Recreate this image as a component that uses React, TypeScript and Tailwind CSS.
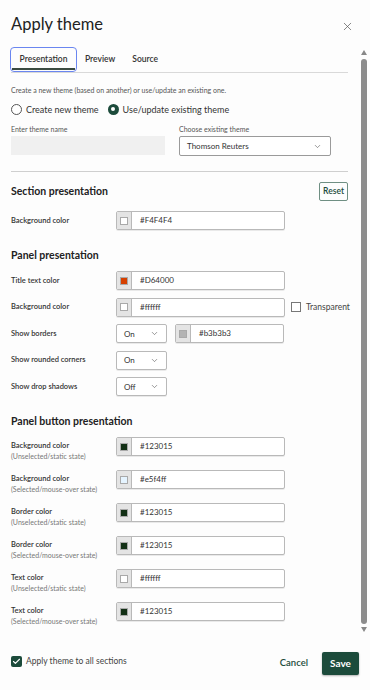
import { ChevronDown, X, Check } from 'lucide-react';

const font = { fontFamily: 'Lato, "Noto Sans", sans-serif' };

// colour input: grey swatch button + hex text
const ColorInput = ({ color, value, w = 'w-[169px]' }: { color: string; value: string; w?: string }) => (
  <div className={`flex shrink-0 h-[19px] ${w} rounded-[2px] border border-[#b9b9b9] bg-white overflow-hidden shadow-[0_1px_0_rgba(0,0,0,0.08)]`}>
    <div className="w-[15px] h-full bg-[#e4e4e4] border-r border-[#b9b9b9] flex items-center justify-center">
      <div className="w-[8px] h-[8px] border border-[#a9a9a9]" style={{ backgroundColor: color }} />
    </div>
    <span className="pl-[8px] text-[8px] leading-[17px] text-[#333]">{value}</span>
  </div>
);

const Select = ({ value, w = 'w-[51px]' }: { value: string; w?: string }) => (
  <div className={`flex shrink-0 h-[19px] ${w} items-center justify-between rounded-[2px] border border-[#b9b9b9] bg-white pl-[7px] pr-[7px] shadow-[0_1px_0_rgba(0,0,0,0.08)]`}>
    <span className="text-[8px] text-[#333]">{value}</span>
    <ChevronDown size={9} strokeWidth={1.6} className="text-[#555]" />
  </div>
);

const Row = ({ label, children, className = '' }: { label: string; children: React.ReactNode; className?: string }) => (
  <div className={`flex items-center ${className}`}>
    <div className="w-[105px] shrink-0 text-[7.5px] font-semibold text-[#333]">{label}</div>
    {children}
  </div>
);

const ButtonRow = ({ label, sub, color, value }: { label: string; sub: string; color: string; value: string }) => (
  <div className="flex items-start h-[33px]">
    <div className="w-[105px] pt-[3px]">
      <div className="text-[7.5px] font-semibold leading-[11px] text-[#333]">{label}</div>
      <div className="text-[7px] leading-[11px] text-[#777]">{sub}</div>
    </div>
    <ColorInput color={color} value={value} />
  </div>
);

export default function App() {
  return (
    <div style={font} className="w-[370px] h-[690px] bg-[#fdfdfd] flex flex-col overflow-hidden text-[#222]">
      {/* header */}
      <div className="flex items-start justify-between pl-[11px] pr-[16px] pt-[12px] h-[44px]">
        <h1 className="text-[16.5px] leading-[24px] text-[#222]">Apply theme</h1>
        <X size={13} strokeWidth={1.3} className="mt-[8px] text-[#555]" />
      </div>

      <div className="flex flex-1 min-h-0">
        {/* scrolling content */}
        <div className="flex-1 pl-[11px] pr-[11px] overflow-hidden">
          {/* tabs */}
          <div className="flex items-end h-[29px] border-b border-[#d9d9d9] text-[8.5px] font-semibold text-[#333]">
            <div className="relative -ml-[1px] h-[25px] w-[67px] rounded-[4px] border-[1.5px] border-[#6a86f0] flex items-center justify-center">
              <span className="-mt-[1px]">Presentation</span>
              <div className="absolute left-[1px] right-[1px] bottom-[1px] h-[2px] bg-[#3a4a40]" />
            </div>
            <div className="h-[25px] px-[7px] flex items-center ml-[1px]">Preview</div>
            <div className="h-[25px] px-[10px] flex items-center">Source</div>
          </div>

          <p className="mt-[12px] text-[7px] text-[#555]">Create a new theme (based on another) or use/update an existing one.</p>

          <div className="mt-[7px] flex items-center text-[9px] text-[#333]">
            <span className="w-[11px] h-[11px] rounded-full border border-[#555] bg-white" />
            <span className="ml-[4px]">Create new theme</span>
            <span className="ml-[9px] w-[11px] h-[11px] rounded-full bg-[#1c4b3b] flex items-center justify-center">
              <span className="w-[4px] h-[4px] rounded-full bg-white" />
            </span>
            <span className="ml-[4px]">Use/update existing theme</span>
          </div>

          <div className="mt-[9px] flex">
            <div className="w-[168px]">
              <div className="text-[7px] text-[#555] leading-[9px]">Enter theme name</div>
              <div className="mt-[2px] h-[19px] w-[154px] bg-[#f0f0f0]" />
            </div>
            <div>
              <div className="text-[7px] text-[#555] leading-[9px]">Choose existing theme</div>
              <div className="mt-[2px] flex h-[20px] w-[152px] items-center justify-between rounded-[2px] border border-[#9a9a9a] bg-white pl-[7px] pr-[8px]">
                <span className="text-[8px] text-[#333]">Thomson Reuters</span>
                <ChevronDown size={9} strokeWidth={1.6} className="text-[#555]" />
              </div>
            </div>
          </div>

          <div className="mt-[15px] h-px bg-[#cfcfcf]" />

          {/* section presentation */}
          <div className="mt-[10px] flex items-center justify-between h-[19px]">
            <h2 className="text-[10.5px] font-bold text-[#222]">Section presentation</h2>
            <div className="h-[19px] px-[3px] rounded-[2px] border border-[#6f8f83] text-[8.5px] font-semibold text-[#1c4b3b] flex items-center">Reset</div>
          </div>
          <Row label="Background color" className="mt-[10px]">
            <ColorInput color="#ffffff" value="#F4F4F4" />
          </Row>

          {/* panel presentation */}
          <h2 className="mt-[18px] text-[10.5px] font-bold leading-[14px] text-[#222]">Panel presentation</h2>
          <div className="mt-[9px] flex flex-col gap-[7.5px]">
            <Row label="Title text color">
              <ColorInput color="#D64000" value="#D64000" />
            </Row>
            <Row label="Background color">
              <ColorInput color="#ffffff" value="#ffffff" />
              <span className="ml-[6px] shrink-0 w-[10px] h-[10px] border border-[#777] bg-white" />
              <span className="ml-[5px] whitespace-nowrap text-[8.5px] text-[#444]">Transparent</span>
            </Row>
            <Row label="Show borders">
              <Select value="On" />
              <div className="ml-[8px]">
                <ColorInput color="#b3b3b3" value="#b3b3b3" w="w-[109px]" />
              </div>
            </Row>
            <Row label="Show rounded corners">
              <Select value="On" />
            </Row>
            <Row label="Show drop shadows">
              <Select value="Off" />
            </Row>
          </div>

          {/* panel button presentation */}
          <h2 className="mt-[18px] text-[10.5px] font-bold leading-[14px] text-[#222]">Panel button presentation</h2>
          <div className="mt-[9px] flex flex-col">
            <ButtonRow label="Background color" sub="(Unselected/static state)" color="#123015" value="#123015" />
            <ButtonRow label="Background color" sub="(Selected/mouse-over state)" color="#e5f4ff" value="#e5f4ff" />
            <ButtonRow label="Border color" sub="(Unselected/static state)" color="#123015" value="#123015" />
            <ButtonRow label="Border color" sub="(Selected/mouse-over state)" color="#123015" value="#123015" />
            <ButtonRow label="Text color" sub="(Unselected/static state)" color="#ffffff" value="#ffffff" />
            <ButtonRow label="Text color" sub="(Selected/mouse-over state)" color="#123015" value="#123015" />
          </div>
        </div>

        {/* scrollbar */}
        <div className="w-[10px] flex flex-col items-center pt-[6px] mr-[1px]">
          <svg width="6" height="5" viewBox="0 0 6 5"><path d="M0 5 L3 0 L6 5 Z" fill="#888" /></svg>
          <div className="mt-[4px] w-[6px] h-[565px] rounded-[3px] bg-[#8c8c8c]" />
          <svg className="mt-[3px]" width="6" height="5" viewBox="0 0 6 5"><path d="M0 0 L3 5 L6 0 Z" fill="#888" /></svg>
        </div>
      </div>

      {/* footer */}
      <div className="h-[55px] flex items-start justify-between pl-[11px] pr-[11px] pt-[17px]">
        <div className="flex items-center mt-[3px]">
          <span className="w-[11px] h-[11px] rounded-[2px] bg-[#1c4b3b] flex items-center justify-center">
            <Check size={9} strokeWidth={3} className="text-white" />
          </span>
          <span className="ml-[4px] text-[8.5px] text-[#444]">Apply theme to all sections</span>
        </div>
        <div className="flex items-center">
          <span className="text-[9.5px] font-semibold text-[#1c4b3b]">Cancel</span>
          <div className="ml-[14px] h-[23px] w-[37px] rounded-[2px] bg-[#1c4b3b] flex items-center justify-center text-[10px] font-bold text-white shadow-[0_1px_2px_rgba(0,0,0,0.3)]">Save</div>
        </div>
      </div>
    </div>
  );
}
